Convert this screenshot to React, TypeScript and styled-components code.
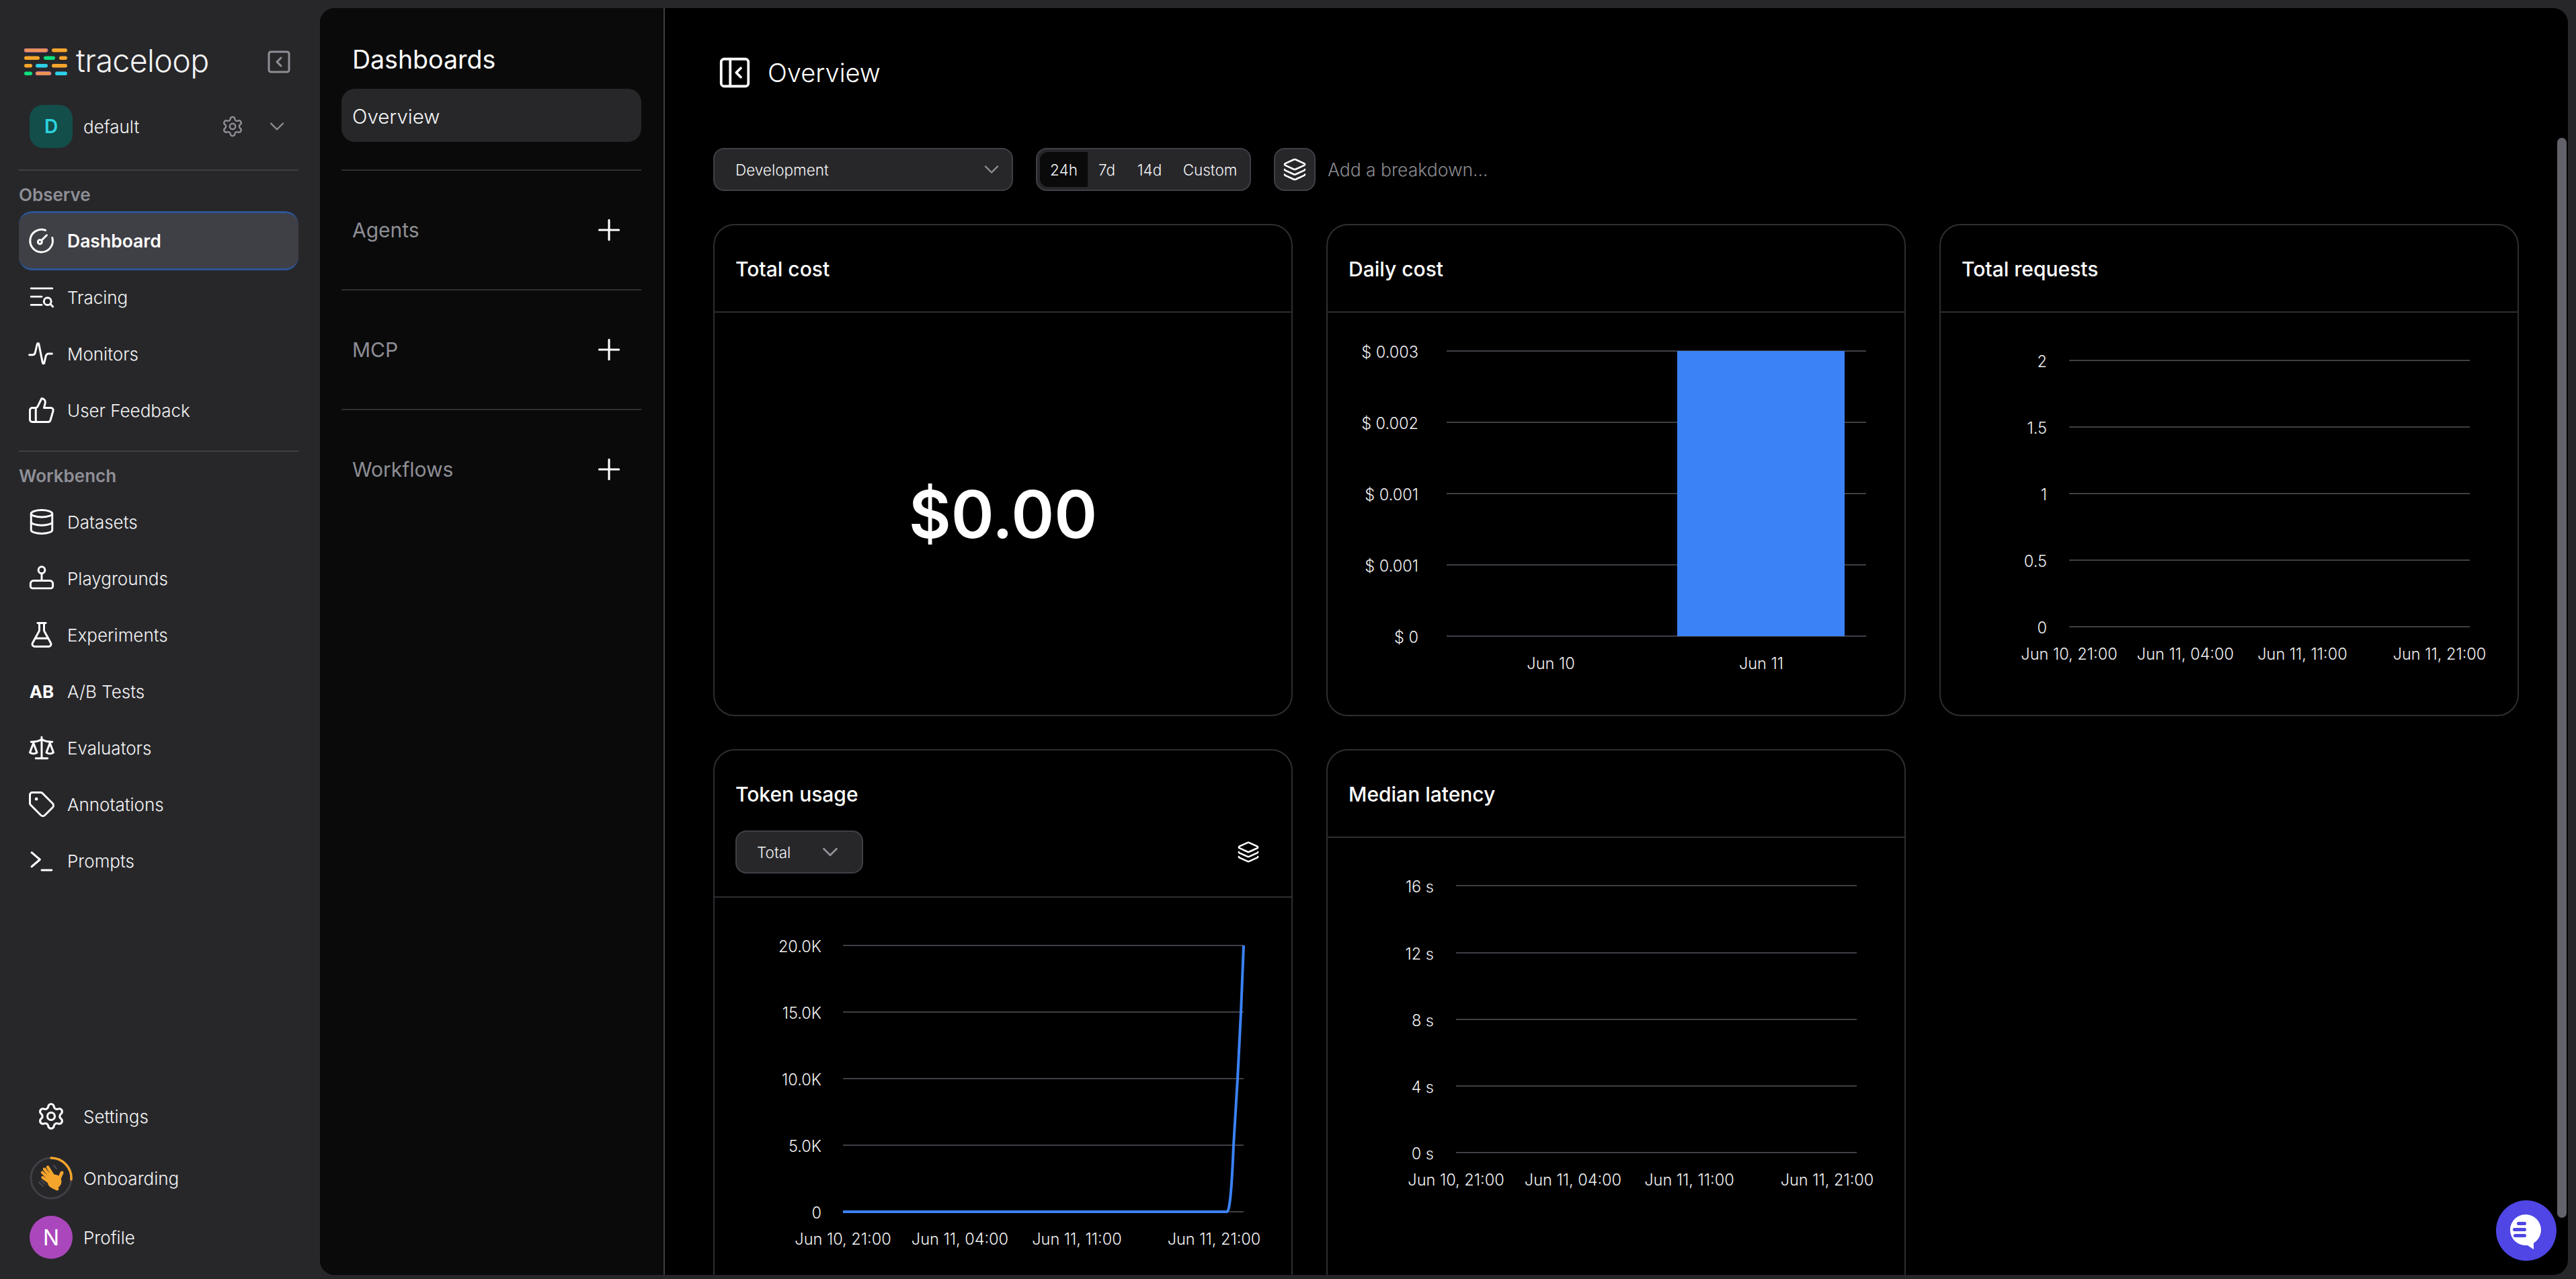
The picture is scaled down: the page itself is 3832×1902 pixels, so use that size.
import React from "react";
import styled, { createGlobalStyle } from "styled-components";
import {
  ChevronDown,
  Database,
  FlaskConical,
  Layers,
  PanelLeftClose,
  Plus,
  Scale,
  Settings,
  Tag,
  ThumbsUp,
} from "lucide-react";

const GlobalStyle = createGlobalStyle`
  html, body, #root { margin: 0; padding: 0; height: 100%; }
  body {
    background: #27272a;
    color: #fafafa;
    font-family: Inter, "Liberation Sans", sans-serif;
    overflow: hidden;
  }
  * { box-sizing: border-box; }
  svg { flex-shrink: 0; }
`;

const Page = styled.div`
  display: flex;
  width: 3832px;
  height: 1902px;
  background: #27272a;
  overflow: hidden;
`;

/* ---------- left sidebar ---------- */

const Sidebar = styled.aside`
  width: 476px;
  flex-shrink: 0;
  display: flex;
  flex-direction: column;
  padding: 72px 32px 30px 28px;
`;

const LogoRow = styled.div`
  display: flex;
  align-items: center;
  justify-content: space-between;
  height: 40px;
  padding: 0 12px 0 8px;
`;

const Brand = styled.div`
  display: flex;
  align-items: center;
  gap: 13px;
`;

const Wordmark = styled.span`
  font-size: 46.5px;
  line-height: 40px;
  font-weight: 300;
  letter-spacing: -0.6px;
  color: #f2f2f2;
  padding-bottom: 4px;
`;

const WorkspaceRow = styled.div`
  display: flex;
  align-items: center;
  height: 64px;
  margin-top: 44px;
  padding-left: 16px;
`;

const WorkspaceAvatar = styled.div`
  width: 64px;
  height: 64px;
  border-radius: 20px;
  background: #134e4a;
  color: #2dd4e0;
  font-size: 28px;
  font-weight: 600;
  display: flex;
  align-items: center;
  justify-content: center;
`;

const WorkspaceName = styled.span`
  margin-left: 16px;
  font-size: 26px;
  font-weight: 300;
  color: #f4f4f5;
  flex: 1;
`;

const MutedIcon = styled.span<{ $gap?: number }>`
  display: flex;
  color: #8e8e95;
  margin-right: ${(p) => p.$gap ?? 0}px;
`;

const Divider = styled.div<{ $top: number }>`
  height: 2px;
  background: #3f3f46;
  margin-top: ${(p) => p.$top}px;
`;

const GroupLabel = styled.div`
  height: 36px;
  line-height: 36px;
  margin-top: 18px;
  font-size: 26px;
  font-weight: 600;
  color: #8f8f96;
`;

const NavList = styled.nav`
  display: flex;
  flex-direction: column;
  margin-top: 8px;
`;

const NavItem = styled.div<{ $active?: boolean }>`
  display: flex;
  align-items: center;
  gap: 20px;
  height: ${(p) => (p.$active ? 88 : 84)}px;
  margin: ${(p) => (p.$active ? "-2px 0" : "0")};
  padding-left: 16px;
  border-radius: 20px;
  font-size: ${(p) => (p.$active ? 26.5 : 26)}px;
  font-weight: ${(p) => (p.$active ? 600 : 300)};
  color: ${(p) => (p.$active ? "#ffffff" : "#f4f4f5")};
  background: ${(p) => (p.$active ? "#3f3f46" : "transparent")};
  border-top: ${(p) => (p.$active ? "3px solid #2c5596" : "none")};
  border-bottom: ${(p) => (p.$active ? "3px solid #2c5596" : "none")};
`;

const NavIcon = styled.span`
  width: 36px;
  height: 36px;
  display: flex;
  align-items: center;
  justify-content: center;
  color: #ffffff;
  flex-shrink: 0;
`;

const AbMark = styled.span`
  font-size: 26px;
  font-weight: 700;
  color: #ffffff;
`;

const FooterList = styled.div`
  margin-top: auto;
  display: flex;
  flex-direction: column;
  gap: 24px;
  padding-left: 16px;
`;

const FooterItem = styled.div`
  display: flex;
  align-items: center;
  gap: 16px;
  height: 64px;
  font-size: 26px;
  font-weight: 300;
  color: #f4f4f5;
  &:first-child {
    margin-bottom: 4px;
  }
`;

const FooterIcon = styled.span`
  width: 64px;
  height: 64px;
  display: flex;
  align-items: center;
  justify-content: center;
  color: #ffffff;
`;

const ProfileAvatar = styled.div`
  width: 64px;
  height: 64px;
  border-radius: 50%;
  background: #ab47bc;
  color: #ffffff;
  font-size: 32px;
  font-weight: 400;
  display: flex;
  align-items: center;
  justify-content: center;
`;

/* ---------- big rounded panel ---------- */

const Panel = styled.div`
  flex: 1;
  display: flex;
  margin: 12px 12px 6px 0;
  border-radius: 22px;
  overflow: hidden;
  background: #000000;
`;

const DashboardsNav = styled.section`
  width: 513px;
  flex-shrink: 0;
  background: #0a0a0a;
  border-right: 2px solid #3f3f46;
  padding: 55px 33px 0 32px;
`;

const DashboardsTitle = styled.h2`
  margin: 0;
  padding-left: 16px;
  height: 44px;
  line-height: 44px;
  font-size: 37.5px;
  font-weight: 400;
  color: #ffffff;
`;

const OverviewLink = styled.div`
  height: 79px;
  margin-top: 21px;
  padding: 3px 0 0 16px;
  border-radius: 20px;
  background: #27272a;
  display: flex;
  align-items: center;
  font-size: 29.5px;
  font-weight: 300;
  color: #f4f4f5;
`;

const NavSection = styled.div<{ $first?: boolean }>`
  height: 178px;
  margin-top: ${(p) => (p.$first ? 41 : 0)}px;
  display: flex;
  align-items: center;
  justify-content: space-between;
  padding: 0 23px 0 16px;
  border-top: 2px solid #2e2e33;
  font-size: 30px;
  font-weight: 400;
  color: #8e8e95;
`;

const PlusIcon = styled.span`
  display: flex;
  color: #ffffff;
`;

/* ---------- main column ---------- */

const Main = styled.main`
  flex: 1;
  position: relative;
  overflow: hidden;
  padding: 72px 0 0 72px;
`;

const HeaderRow = styled.div`
  display: flex;
  align-items: center;
  height: 48px;
  gap: 22px;
  margin-left: 5px;
`;

const HeaderTitle = styled.h1`
  margin: 0;
  font-size: 38px;
  font-weight: 300;
  color: #ffffff;
`;

const Toolbar = styled.div`
  display: flex;
  align-items: center;
  margin-top: 88px;
  height: 64px;
`;

const SelectBox = styled.div<{ $width: number; $padLeft: number; $padRight: number }>`
  width: ${(p) => p.$width}px;
  height: 64px;
  flex-shrink: 0;
  border-radius: 16px;
  background: #27272a;
  border: 2px solid #3f3f46;
  display: flex;
  align-items: center;
  justify-content: space-between;
  padding: 0 ${(p) => p.$padRight}px 0 ${(p) => p.$padLeft}px;
  font-size: 22.5px;
  font-weight: 300;
  color: #f4f4f5;
`;

const TimeGroup = styled.div`
  display: flex;
  margin-left: 34px;
  width: 320px;
  height: 64px;
  padding: 4px;
  border-radius: 16px;
  background: #27272a;
  border: 2px solid #3f3f46;
`;

const TimeCell = styled.div<{ $width: number; $active?: boolean }>`
  width: ${(p) => p.$width}px;
  height: 52px;
  display: flex;
  align-items: center;
  justify-content: center;
  font-size: 22.5px;
  font-weight: 300;
  color: #f4f4f5;
  background: ${(p) => (p.$active ? "#0a0a0a" : "transparent")};
  border-radius: ${(p) => (p.$active ? "12px 0 0 12px" : "0")};
`;

const LayersButton = styled.div`
  width: 62px;
  height: 64px;
  margin-left: 34px;
  border-radius: 16px;
  background: #27272a;
  border: 2px solid #3f3f46;
  display: flex;
  align-items: center;
  justify-content: center;
  color: #ffffff;
`;

const BreakdownHint = styled.span`
  margin-left: 18px;
  font-size: 26.5px;
  font-weight: 300;
  color: #8a8a90;
`;

const CardGrid = styled.div`
  display: grid;
  grid-template-columns: repeat(3, 862px);
  grid-template-rows: 732px 900px;
  gap: 49px 50px;
  margin-top: 49px;
`;

const Card = styled.article`
  border: 2px solid #2e2e33;
  border-radius: 32px;
  background: #000000;
  display: flex;
  flex-direction: column;
`;

const CardHeader = styled.header<{ $tall?: boolean }>`
  height: ${(p) => (p.$tall ? 219 : 130)}px;
  flex-shrink: 0;
  padding: 45px 31px 0;
  border-bottom: 2px solid #2e2e33;
`;

const CardTitle = styled.h3`
  margin: 0;
  height: 40px;
  line-height: 40px;
  font-size: 30px;
  font-weight: 500;
  color: #ffffff;
`;

const CardControls = styled.div`
  display: flex;
  align-items: center;
  justify-content: space-between;
  margin-top: 34px;
  padding-right: 16px;
`;

const LayersPlain = styled.span`
  display: flex;
  color: #ffffff;
`;

const CardBody = styled.div`
  flex: 1;
  min-height: 0;
`;

const BigValue = styled.div`
  height: 100%;
  display: flex;
  align-items: center;
  justify-content: center;
  font-size: 97px;
  font-weight: 600;
  color: #ffffff;
`;

const ChartSvg = styled.svg`
  display: block;
  width: 858px;
  height: 640px;
  overflow: visible;
`;

const AxisText = styled.text`
  font-size: 23.5px;
  font-weight: 300;
  fill: #f0f0f2;
`;

const ScrollThumb = styled.div`
  position: absolute;
  right: 2px;
  top: 193px;
  bottom: 85px;
  width: 14px;
  border-radius: 7px;
  background: #62626a;
`;

const ChatBubble = styled.div`
  position: absolute;
  right: 17px;
  bottom: 21px;
  width: 90px;
  height: 90px;
  border-radius: 50%;
  background: #4f46e5;
  display: flex;
  align-items: center;
  justify-content: center;
`;

/* ---------- drawings ---------- */

const bars = [
  { x: 36, y: 72, w: 35, c: "#ec9350", s: "#c86ec0" },
  { x: 77, y: 72, w: 23, c: "#f5a52c" },
  { x: 36, y: 83.5, w: 23, c: "#f5a52c" },
  { x: 65, y: 83.5, w: 17, c: "#0fe07c" },
  { x: 88, y: 83.5, w: 12, c: "#f5a52c" },
  { x: 36, y: 95, w: 12, c: "#f5a52c" },
  { x: 53, y: 95, w: 18, c: "#2dcfe6" },
  { x: 77, y: 95, w: 23, c: "#f5a52c" },
  { x: 36, y: 106.5, w: 12, c: "#0fe07c" },
  { x: 53, y: 106.5, w: 23, c: "#ec9350", s: "#c86ec0" },
  { x: 82, y: 106.5, w: 18, c: "#2dcfe6" },
];

const LogoMark = () => (
  <svg width="64" height="40" viewBox="36 72 64 40">
    {bars.map((b, i) => (
      <rect
        key={i}
        x={b.x}
        y={b.y}
        width={b.w}
        height={5.5}
        rx={2.75}
        fill={b.c}
        stroke={b.s}
        strokeWidth={b.s ? 0.8 : 0}
      />
    ))}
  </svg>
);

const CollapseIcon = () => (
  <svg width="34" height="36" viewBox="0 0 34 36" fill="none" stroke="#8e8e95" strokeWidth="3" strokeLinecap="round" strokeLinejoin="round">
    <rect x="2" y="3" width="30" height="30" rx="3" />
    <path d="M20 12l-6 6 6 6" />
  </svg>
);

const iconProps = {
  width: 42,
  height: 42,
  viewBox: "0 0 24 24",
  fill: "none",
  stroke: "currentColor",
  strokeWidth: 1.7,
  strokeLinecap: "round" as const,
  strokeLinejoin: "round" as const,
};

const GaugeIcon = () => (
  <svg {...iconProps}>
    <path d="M15.2 3.1A9.6 9.6 0 1 0 21 9.4" />
    <circle cx="10.5" cy="13" r="1.7" />
    <path d="M12 11.6l4.3-4.3" />
  </svg>
);

const TraceIcon = () => (
  <svg {...iconProps}>
    <path d="M3 4.5h18M3 11.5h9M3 18.5h9" />
    <circle cx="17" cy="15.5" r="3.1" />
    <path d="M19.3 17.8l2.2 2.2" />
  </svg>
);

const PulseIcon = () => (
  <svg {...iconProps}>
    <path d="M1.5 13h2.8c1.2 0 1.8-.6 2.2-2l1.7-7.2c.2-.9 1.2-.9 1.4 0l3.2 16c.2.9 1.2.9 1.4 0l1.2-5.3c.4-1.6 1-2.5 2.4-2.5h3" />
  </svg>
);

const JoystickIcon = () => (
  <svg {...iconProps}>
    <circle cx="12" cy="5" r="2.8" />
    <path d="M12 7.8v6M5 14h14a2.5 2.5 0 0 1 2.5 2.5v2.2a1.8 1.8 0 0 1-1.8 1.8H4.3a1.8 1.8 0 0 1-1.8-1.8v-2.2A2.5 2.5 0 0 1 5 14z" />
  </svg>
);

const PromptIcon = () => (
  <svg {...iconProps}>
    <path d="M3.5 5l7 6-7 6M12 20h8.5" />
  </svg>
);

const WaveRing = () => (
  <svg width="64" height="64" viewBox="0 0 64 64" fill="none">
    <circle cx="32" cy="32" r="30" stroke="#3f3f46" strokeWidth="3" />
    <path d="M32 2a30 30 0 0 1 30 32" stroke="#f5a52c" strokeWidth="3.5" strokeLinecap="round" />
    <g stroke="#f5a52c" strokeLinecap="round">
      <path d="M36 30L27 15.5M33 32L22 18.5M31 35L19 23.5M30.5 39L19.5 31" strokeWidth="4.4" />
      <path d="M43 35l5-11" strokeWidth="5" />
    </g>
    <circle cx="37" cy="37" r="10.5" fill="#f5a52c" />
    <path d="M35 45l6 3" stroke="#f5a52c" strokeWidth="5" strokeLinecap="round" />
    <path d="M14 38l6 6M17 35l6 6M36 13l4 5" stroke="#55555c" strokeWidth="1.4" strokeLinecap="round" />
  </svg>
);

const ChatIcon = () => (
  <svg width="56" height="56" viewBox="0 0 56 56">
    <circle cx="27" cy="27" r="23" fill="#ffffff" />
    <path d="M24 46l15 10V40z" fill="#ffffff" />
    <rect x="14" y="15" width="14" height="5" rx="2.5" fill="#4f46e5" />
    <rect x="8" y="24" width="20" height="5" rx="2.5" fill="#4f46e5" />
    <rect x="9" y="33" width="19" height="5" rx="2.5" fill="#4f46e5" />
  </svg>
);

/* ---------- chart data (x/y inside the card body) ---------- */

type Tick = { label: string; y: number };
type XTick = { label: string; x: number };

type ChartProps = {
  x1: number;
  x2: number;
  labelX: number;
  ticks: Tick[];
  xTicks: XTick[];
  xLabelY: number;
  children?: React.ReactNode;
};

const Chart = ({ x1, x2, labelX, ticks, xTicks, xLabelY, children }: ChartProps) => (
  <ChartSvg viewBox="0 0 858 640">
    {ticks.map((t) => (
      <g key={t.label + t.y}>
        <line x1={x1} x2={x2} y1={t.y} y2={t.y} stroke="#3f3f46" strokeWidth="2" />
        <AxisText x={labelX} y={t.y + 10} textAnchor="end">
          {t.label}
        </AxisText>
      </g>
    ))}
    {xTicks.map((t) => (
      <AxisText key={t.label} x={t.x} y={xLabelY} textAnchor="middle">
        {t.label}
      </AxisText>
    ))}
    {children}
  </ChartSvg>
);

const dailyTicks: Tick[] = [
  { label: "$ 0.003", y: 57 },
  { label: "$ 0.002", y: 163 },
  { label: "$ 0.001", y: 269 },
  { label: "$ 0.001", y: 375 },
  { label: "$ 0", y: 481 },
];

const requestTicks: Tick[] = [
  { label: "2", y: 71 },
  { label: "1.5", y: 170 },
  { label: "1", y: 269 },
  { label: "0.5", y: 368 },
  { label: "0", y: 467 },
];

const tokenTicks: Tick[] = [
  { label: "20.0K", y: 71 },
  { label: "15.0K", y: 170 },
  { label: "10.0K", y: 269 },
  { label: "5.0K", y: 368 },
  { label: "0", y: 467 },
];

const latencyTicks: Tick[] = [
  { label: "16 s", y: 71 },
  { label: "12 s", y: 171 },
  { label: "8 s", y: 270 },
  { label: "4 s", y: 369 },
  { label: "0 s", y: 468 },
];

const navTop = [
  { label: "Tracing", icon: <TraceIcon /> },
  { label: "Monitors", icon: <PulseIcon /> },
  { label: "User Feedback", icon: <ThumbsUp size={42} strokeWidth={1.7} /> },
];

const navBench = [
  { label: "Datasets", icon: <Database size={42} strokeWidth={1.7} /> },
  { label: "Playgrounds", icon: <JoystickIcon /> },
  { label: "Experiments", icon: <FlaskConical size={42} strokeWidth={1.7} /> },
  { label: "A/B Tests", icon: <AbMark>AB</AbMark> },
  { label: "Evaluators", icon: <Scale size={42} strokeWidth={1.7} /> },
  { label: "Annotations", icon: <Tag size={42} strokeWidth={1.7} /> },
  { label: "Prompts", icon: <PromptIcon /> },
];

const SideNav = () => (
  <Sidebar>
    <LogoRow>
      <Brand>
        <LogoMark />
        <Wordmark>traceloop</Wordmark>
      </Brand>
      <CollapseIcon />
    </LogoRow>
    <WorkspaceRow>
      <WorkspaceAvatar>D</WorkspaceAvatar>
      <WorkspaceName>default</WorkspaceName>
      <MutedIcon $gap={31}>
        <Settings size={34} strokeWidth={1.7} />
      </MutedIcon>
      <MutedIcon $gap={14}>
        <ChevronDown size={36} strokeWidth={1.6} />
      </MutedIcon>
    </WorkspaceRow>
    <Divider $top={32} />
    <GroupLabel>Observe</GroupLabel>
    <NavList>
      <NavItem $active>
        <NavIcon>
          <GaugeIcon />
        </NavIcon>
        Dashboard
      </NavItem>
      {navTop.map((n) => (
        <NavItem key={n.label}>
          <NavIcon>{n.icon}</NavIcon>
          {n.label}
        </NavItem>
      ))}
    </NavList>
    <Divider $top={18} />
    <GroupLabel>Workbench</GroupLabel>
    <NavList>
      {navBench.map((n) => (
        <NavItem key={n.label}>
          <NavIcon>{n.icon}</NavIcon>
          {n.label}
        </NavItem>
      ))}
    </NavList>
    <FooterList>
      <FooterItem>
        <FooterIcon>
          <Settings size={44} strokeWidth={1.7} />
        </FooterIcon>
        Settings
      </FooterItem>
      <FooterItem>
        <FooterIcon>
          <WaveRing />
        </FooterIcon>
        Onboarding
      </FooterItem>
      <FooterItem>
        <ProfileAvatar>N</ProfileAvatar>
        Profile
      </FooterItem>
    </FooterList>
  </Sidebar>
);

const App = () => (
  <Page>
    <GlobalStyle />
    <SideNav />
    <Panel>
      <DashboardsNav>
        <DashboardsTitle>Dashboards</DashboardsTitle>
        <OverviewLink>Overview</OverviewLink>
        {["Agents", "MCP", "Workflows"].map((name, i) => (
          <NavSection key={name} $first={i === 0}>
            {name}
            <PlusIcon>
              <Plus size={50} strokeWidth={1.5} />
            </PlusIcon>
          </NavSection>
        ))}
      </DashboardsNav>
      <Main>
        <HeaderRow>
          <PanelLeftClose size={54} strokeWidth={1.7} />
          <HeaderTitle>Overview</HeaderTitle>
        </HeaderRow>
        <Toolbar>
          <SelectBox $width={446} $padLeft={31} $padRight={12}>
            Development
            <MutedIcon>
              <ChevronDown size={36} strokeWidth={1.6} />
            </MutedIcon>
          </SelectBox>
          <TimeGroup>
            <TimeCell $width={71} $active>
              24h
            </TimeCell>
            <TimeCell $width={57}>7d</TimeCell>
            <TimeCell $width={70}>14d</TimeCell>
            <TimeCell $width={110}>Custom</TimeCell>
          </TimeGroup>
          <LayersButton>
            <Layers size={36} strokeWidth={1.8} />
          </LayersButton>
          <BreakdownHint>Add a breakdown...</BreakdownHint>
        </Toolbar>
        <CardGrid>
          <Card>
            <CardHeader>
              <CardTitle>Total cost</CardTitle>
            </CardHeader>
            <CardBody>
              <BigValue>$0.00</BigValue>
            </CardBody>
          </Card>
          <Card>
            <CardHeader>
              <CardTitle>Daily cost</CardTitle>
            </CardHeader>
            <CardBody>
              <Chart
                x1={177}
                x2={801}
                labelX={135}
                ticks={dailyTicks}
                xLabelY={530}
                xTicks={[
                  { label: "Jun 10", x: 332 },
                  { label: "Jun 11", x: 645 },
                ]}
              >
                <rect x={520} y={57} width={249} height={424} fill="#3b82f6" />
              </Chart>
            </CardBody>
          </Card>
          <Card>
            <CardHeader>
              <CardTitle>Total requests</CardTitle>
            </CardHeader>
            <CardBody>
              <Chart
                x1={191}
                x2={787}
                labelX={158}
                ticks={requestTicks}
                xLabelY={516}
                xTicks={[
                  { label: "Jun 10, 21:00", x: 191 },
                  { label: "Jun 11, 04:00", x: 364 },
                  { label: "Jun 11, 11:00", x: 538 },
                  { label: "Jun 11, 21:00", x: 742 },
                ]}
              />
            </CardBody>
          </Card>
          <Card>
            <CardHeader $tall>
              <CardTitle>Token usage</CardTitle>
              <CardControls>
                <SelectBox $width={190} $padLeft={30} $padRight={28}>
                  Total
                  <MutedIcon>
                    <ChevronDown size={38} strokeWidth={1.8} />
                  </MutedIcon>
                </SelectBox>
                <LayersPlain>
                  <Layers size={34} strokeWidth={1.8} />
                </LayersPlain>
              </CardControls>
            </CardHeader>
            <CardBody>
              <Chart
                x1={191}
                x2={787}
                labelX={159}
                ticks={tokenTicks}
                xLabelY={516}
                xTicks={[
                  { label: "Jun 10, 21:00", x: 191 },
                  { label: "Jun 11, 04:00", x: 365 },
                  { label: "Jun 11, 11:00", x: 539 },
                  { label: "Jun 11, 21:00", x: 743 },
                ]}
              >
                <path
                  d="M191 467H762C766 467 769 440 772 368L778 269L783 170L787 71"
                  fill="none"
                  stroke="#3b82f6"
                  strokeWidth="4"
                />
              </Chart>
            </CardBody>
          </Card>
          <Card>
            <CardHeader>
              <CardTitle>Median latency</CardTitle>
            </CardHeader>
            <CardBody>
              <Chart
                x1={191}
                x2={787}
                labelX={158}
                ticks={latencyTicks}
                xLabelY={517}
                xTicks={[
                  { label: "Jun 10, 21:00", x: 191 },
                  { label: "Jun 11, 04:00", x: 365 },
                  { label: "Jun 11, 11:00", x: 538 },
                  { label: "Jun 11, 21:00", x: 743 },
                ]}
              />
            </CardBody>
          </Card>
        </CardGrid>
        <ScrollThumb />
        <ChatBubble>
          <ChatIcon />
        </ChatBubble>
      </Main>
    </Panel>
  </Page>
);

export default App;
